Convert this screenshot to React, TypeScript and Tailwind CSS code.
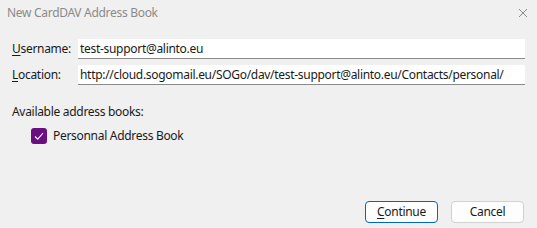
import React, { useState } from 'react';

export default function App() {
  const [username, setUsername] = useState('test-support@alinto.eu');
  const [location, setLocation] = useState('http://cloud.sogomail.eu/SOGo/dav/test-support@alinto.eu/Contacts/personal/');
  const [checked, setChecked] = useState(true);

  return (
    <div
      className="w-[537px] h-[228px] bg-[#f0f0f0] text-[12px] tracking-[-0.3px] text-[#1a1a1a] flex flex-col"
      style={{ fontFamily: '"Noto Sans", "Open Sans", sans-serif' }}
    >
      {/* title bar */}
      <div className="h-[26px] flex items-center justify-between pl-[7px] pr-[9px]">
        <span className="text-[#8a8a8a] leading-none">New CardDAV Address Book</span>
        <svg width="10" height="10" viewBox="0 0 10 10" className="text-[#8a8a8a]">
          <path d="M1 1 L9 9 M9 1 L1 9" stroke="currentColor" strokeWidth="1" />
        </svg>
      </div>

      <div className="flex flex-col gap-[6px] pl-[12px] pr-[12px] mt-[13px]">
        <div className="flex items-center">
          <label className="w-[66px] leading-none"><span className="underline underline-offset-2">U</span>sername:</label>
          <input
            value={username}
            onChange={(e) => setUsername(e.target.value)}
            className="flex-1 h-[20px] bg-white border-b border-[#8a8a8a] px-[2px] outline-none leading-none"
          />
        </div>
        <div className="flex items-center">
          <label className="w-[66px] leading-none"><span className="underline underline-offset-2">L</span>ocation:</label>
          <input
            value={location}
            onChange={(e) => setLocation(e.target.value)}
            className="flex-1 h-[20px] bg-white border-b border-[#8a8a8a] px-[2px] outline-none leading-none"
          />
        </div>
      </div>

      <div className="pl-[12px] mt-[21px] leading-none">Available address books:</div>

      <label className="flex items-center gap-[6px] pl-[31px] mt-[10px] cursor-pointer">
        <span
          onClick={() => setChecked(!checked)}
          className={`w-[16px] h-[16px] rounded-[3px] flex items-center justify-center ${checked ? 'bg-[#6b0f80]' : 'bg-white border border-[#555]'}`}
        >
          {checked && (
            <svg width="12" height="12" viewBox="0 0 12 12">
              <path d="M2 6.5 L4.8 9.2 L10 3" stroke="white" strokeWidth="1.1" fill="none" />
            </svg>
          )}
        </span>
        <span className="leading-none">Personnal Address Book</span>
      </label>

      <div className="flex-1" />

      <div className="flex justify-end gap-[13px] pr-[13px] pb-[5px]">
        <button className="w-[73px] h-[22px] bg-[#fdfdfd] border border-[#0067c0] rounded-[4px] leading-none">
          <span className="underline underline-offset-2">C</span>ontinue
        </button>
        <button className="w-[73px] h-[22px] bg-[#fdfdfd] border border-[#d0d0d0] rounded-[4px] leading-none">
          Cancel
        </button>
      </div>
    </div>
  );
}
